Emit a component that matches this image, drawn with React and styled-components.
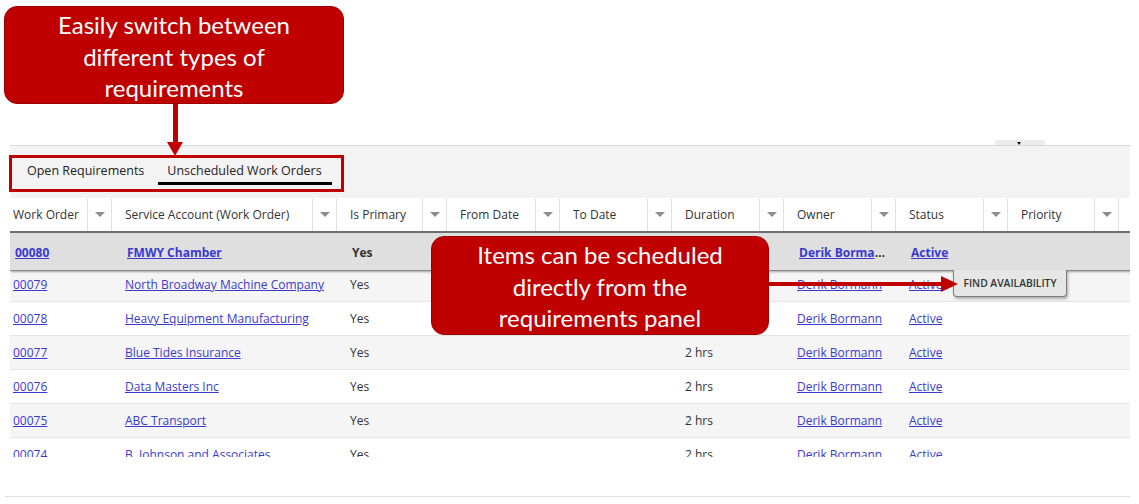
import React from 'react';
import styled, { createGlobalStyle } from 'styled-components';

const GlobalStyle = createGlobalStyle`
  html, body {
    margin: 0;
    padding: 0;
    background: #ffffff;
  }
  body {
    font-family: 'Open Sans', 'Noto Sans', sans-serif;
    color: #333333;
  }
`;

const columns = [
  { label: 'Work Order', width: 102 },
  { label: 'Service Account (Work Order)', width: 225 },
  { label: 'Is Primary', width: 110 },
  { label: 'From Date', width: 113 },
  { label: 'To Date', width: 112 },
  { label: 'Duration', width: 112 },
  { label: 'Owner', width: 112 },
  { label: 'Status', width: 112 },
  { label: 'Priority', width: 111 },
];

const gridTemplate = columns.map((c) => `${c.width}px`).join(' ') + ' 1fr';

const rows = [
  { id: '00080', account: 'FMWY Chamber', selected: true },
  { id: '00079', account: 'North Broadway Machine Company' },
  { id: '00078', account: 'Heavy Equipment Manufacturing' },
  { id: '00077', account: 'Blue Tides Insurance' },
  { id: '00076', account: 'Data Masters Inc' },
  { id: '00075', account: 'ABC Transport' },
  { id: '00074', account: 'B. Johnson and Associates' },
];

function App() {
  return (
    <Page>
      <GlobalStyle />
      <TopArea>
        <Callout $width={340} $height={98}>
          Easily switch between
          <br />
          different types of
          <br />
          requirements
          <DownArrow>
            <span className='stem' />
            <span className='head' />
          </DownArrow>
        </Callout>
      </TopArea>

      <Panel>
        <SplitHandle />
        <TabStrip>
          <TabHighlight>
            <Tab $left={15} $right={14}>
              Open Requirements
            </Tab>
            <Tab $left={9} $right={10} $active>
              Unscheduled Work Orders
            </Tab>
          </TabHighlight>
        </TabStrip>

        <HeaderRow>
          {columns.map((c, i) => (
            <HeaderCell key={c.label}>
              <HeaderLabel $first={i === 0}>{c.label}</HeaderLabel>
              <FilterBox>
                <span />
              </FilterBox>
            </HeaderCell>
          ))}
          <div />
        </HeaderRow>

        <Viewport>
          {rows.map((r, i) => (
            <DataRow key={r.id} $selected={r.selected} $alt={i % 2 === 1}>
              <Cell $first>
                <Link>{r.id}</Link>
              </Cell>
              <Cell>
                <Link>{r.account}</Link>
              </Cell>
              <Cell>Yes</Cell>
              <Cell />
              <Cell />
              <Cell>2 hrs</Cell>
              <Cell>
                <Link>Derik Bormann</Link>
              </Cell>
              <Cell>
                <Link>Active</Link>
              </Cell>
              <Cell />
              <Cell />
              {r.selected && <FindButton>FIND AVAILABILITY</FindButton>}
            </DataRow>
          ))}
        </Viewport>
        <PanelFoot />
      </Panel>
      <BottomRule />

      <FloatingCallout>
        <Callout $width={338} $height={99}>
          Items can be scheduled
          <br />
          directly from the
          <br />
          requirements panel
        </Callout>
        <RightArrow>
          <span className='stem' />
          <span className='head' />
        </RightArrow>
      </FloatingCallout>
    </Page>
  );
}

const Page = styled.div`
  position: relative;
  width: 1139px;
  height: 504px;
  overflow: hidden;
  background: #fff;
`;

const TopArea = styled.div`
  height: 145px;
  padding: 6px 0 0 4px;
  box-sizing: border-box;
`;

const Callout = styled.div`
  position: relative;
  width: ${(p) => p.$width}px;
  height: ${(p) => p.$height}px;
  box-sizing: border-box;
  padding-top: 2px;
  background: #c00000;
  border: 1px solid #9a0000;
  border-radius: 13px;
  color: #ffffff;
  font-family: 'Lato', 'Open Sans', sans-serif;
  font-size: 24px;
  line-height: 31.5px;
  text-align: center;
`;

const DownArrow = styled.div`
  position: absolute;
  left: 162px;
  top: 97px;
  width: 16px;
  display: flex;
  flex-direction: column;
  align-items: center;
  z-index: 3;
  .stem {
    width: 5px;
    height: 38px;
    background: #c00000;
  }
  .head {
    width: 0;
    height: 0;
    border-left: 8px solid transparent;
    border-right: 8px solid transparent;
    border-top: 14px solid #c00000;
  }
`;

const Panel = styled.div`
  position: relative;
  margin-left: 10px;
  width: 1120px;
  border-top: 1px solid #d9d9d9;
`;

const SplitHandle = styled.div`
  position: absolute;
  left: 985px;
  top: -6px;
  width: 50px;
  height: 5px;
  background: #ececec;
  &::after {
    content: '';
    position: absolute;
    left: 22px;
    top: 2px;
    border-left: 2px solid transparent;
    border-right: 2px solid transparent;
    border-top: 3px solid #111;
  }
`;

const TabStrip = styled.div`
  height: 52px;
  box-sizing: border-box;
  padding-top: 9px;
  background: #f3f3f3;
`;

const TabHighlight = styled.div`
  display: flex;
  align-items: flex-start;
  margin-left: -1px;
  width: 335px;
  height: 37px;
  box-sizing: border-box;
  padding-top: 2px;
  border: 3px solid #c00000;
`;

const Tab = styled.div`
  padding: 0 ${(p) => p.$right}px 0 ${(p) => p.$left}px;
  font-size: 12.5px;
  line-height: 22px;
  color: #222;
  white-space: nowrap;
  border-bottom: 3px solid ${(p) => (p.$active ? '#000' : 'transparent')};
`;

const HeaderRow = styled.div`
  display: grid;
  grid-template-columns: ${gridTemplate};
  height: 35px;
  box-sizing: border-box;
  background: #fff;
  border-bottom: 2px solid #6f6f6f;
`;

const HeaderCell = styled.div`
  display: flex;
  align-items: stretch;
`;

const HeaderLabel = styled.div`
  flex: 1;
  display: flex;
  align-items: center;
  padding-left: ${(p) => (p.$first ? 3 : 13)}px;
  font-size: 12px;
  color: #333;
  white-space: nowrap;
`;

const FilterBox = styled.div`
  width: 25px;
  box-sizing: border-box;
  border-left: 1px solid #e2e2e2;
  border-right: 1px solid #e2e2e2;
  display: flex;
  align-items: center;
  justify-content: center;
  span {
    width: 0;
    height: 0;
    border-left: 5px solid transparent;
    border-right: 5px solid transparent;
    border-top: 5px solid #8c8c8c;
  }
`;

const Viewport = styled.div`
  height: 224px;
  overflow: hidden;
  background: #fff;
`;

const DataRow = styled.div`
  position: relative;
  display: grid;
  grid-template-columns: ${gridTemplate};
  height: ${(p) => (p.$selected ? 38 : 34)}px;
  box-sizing: border-box;
  align-items: center;
  font-size: 12px;
  background: ${(p) => (p.$selected ? '#dfdfdf' : p.$alt ? '#f5f5f5' : '#ffffff')};
  border-bottom: 1px solid ${(p) => (p.$selected ? '#8a8a8a' : '#e4e4e4')};
  font-weight: ${(p) => (p.$selected ? 700 : 400)};
  padding-left: ${(p) => (p.$selected ? 2 : 0)}px;
  padding-top: ${(p) => (p.$selected ? 2 : 0)}px;
  margin-bottom: ${(p) => (p.$selected ? -3 : 0)}px;
  z-index: ${(p) => (p.$selected ? 2 : 0)};
  box-shadow: ${(p) => (p.$selected ? '1px 1px 2px rgba(0,0,0,0.35)' : 'none')};
`;

const Cell = styled.div`
  padding-left: ${(p) => (p.$first ? 3 : 13)}px;
  padding-right: 10px;
  white-space: nowrap;
  overflow: hidden;
  text-overflow: ellipsis;
  color: #333;
`;

const Link = styled.a`
  color: #3a3acf;
  text-decoration: underline;
  cursor: pointer;
`;

const FindButton = styled.div`
  position: absolute;
  left: 943px;
  top: 37px;
  width: 114px;
  height: 27px;
  box-sizing: border-box;
  display: flex;
  align-items: center;
  justify-content: center;
  background: #e6e6e6;
  border: 1px solid #7d7d7d;
  border-top: none;
  border-radius: 0 0 4px 4px;
  box-shadow: 1px 2px 3px rgba(0, 0, 0, 0.3);
  font-size: 10.3px;
  font-weight: 600;
  color: #333;
`;

const PanelFoot = styled.div`
  height: 39px;
  background: #fff;
`;

const BottomRule = styled.div`
  margin-left: 5px;
  width: 1125px;
  border-top: 1px solid #dedede;
`;

const FloatingCallout = styled.div`
  position: absolute;
  left: 431px;
  top: 236px;
  display: flex;
  align-items: flex-start;
  z-index: 5;
`;

const RightArrow = styled.div`
  display: flex;
  align-items: center;
  margin-top: 40px;
  .stem {
    width: 172px;
    height: 4px;
    background: #c00000;
  }
  .head {
    width: 0;
    height: 0;
    border-top: 8px solid transparent;
    border-bottom: 8px solid transparent;
    border-left: 17px solid #c00000;
  }
`;

export default App;
